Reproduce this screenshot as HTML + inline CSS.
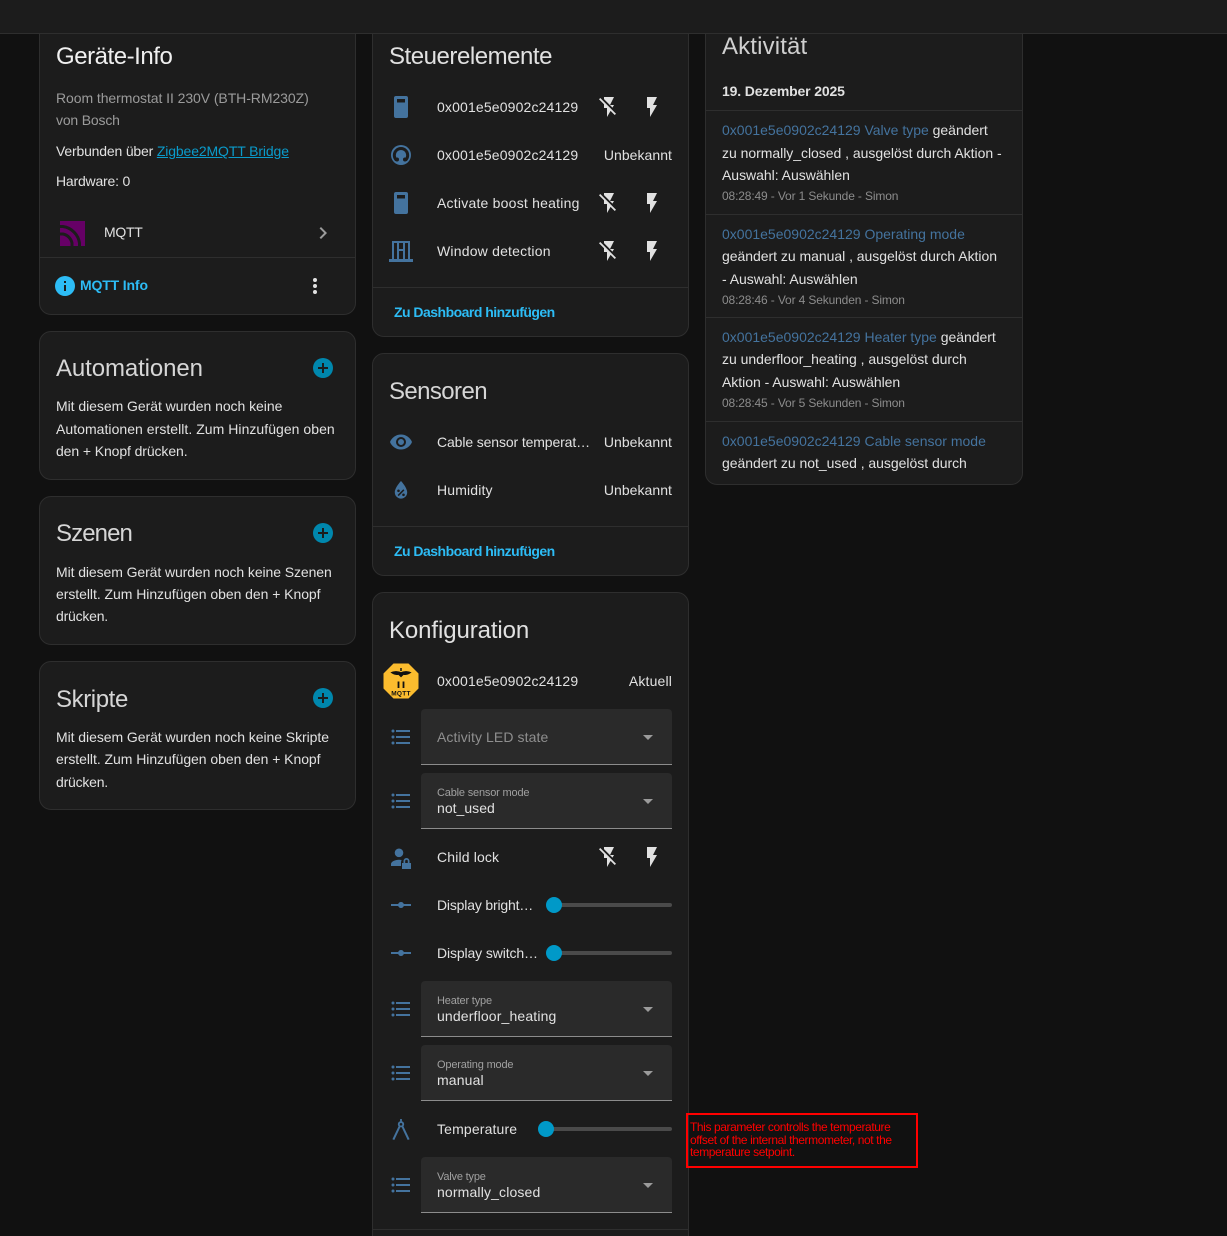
<!DOCTYPE html>
<html lang="de"><head><meta charset="utf-8"><title>Gerät</title>
<style>
html,body{margin:0;padding:0;background:#111;width:1227px;height:1236px;overflow:hidden}
body{position:relative;font-family:"Liberation Sans",sans-serif;font-size:14px;color:#e1e1e1}
.top{position:absolute;left:0;top:0;width:1227px;height:33px;background:#1c1c1c;border-bottom:1px solid #2e2e2e;z-index:5}
.c{position:absolute;box-sizing:border-box;background:#1c1c1c;border:1px solid #2e2e2e;border-radius:12px}
.t{position:absolute;white-space:nowrap;line-height:20px;height:20px;letter-spacing:.15px}
.p{letter-spacing:-.06px}
.e{letter-spacing:-.03px}
.h{font-size:24px;line-height:30px;height:30px;letter-spacing:-.1px}
.g{color:#9b9b9b}
.b{color:#44739e;letter-spacing:0}
.m{font-size:12px;color:#8c8c8c;letter-spacing:-.14px}
.lk{font-weight:bold;color:#2dbcf5;letter-spacing:-.15px}
.d{position:absolute;height:1px;background:#2e2e2e}
.f{position:absolute;left:421px;width:251px;height:56px;box-sizing:border-box;background:#2a2a2a;border-bottom:1px solid #8c8c8c;border-radius:4px 4px 0 0}
.l{font-size:11px;color:#a0a0a0;letter-spacing:-.18px}
.tr{position:absolute;height:4px;background:#4a4a4a;border-radius:2px}
.th{position:absolute;width:16px;height:16px;border-radius:50%;background:#0099c8}
svg.i{position:absolute;width:24px;height:24px;fill:#44739e}
svg.w{fill:#e1e1e1}
svg.a{fill:#9b9b9b}
.note{position:absolute;left:686px;top:1113px;width:232px;height:55px;box-sizing:border-box;border:2px solid #f00;color:#f00;font-size:12px;line-height:12.5px;padding:6px 0 0 2px;white-space:nowrap;letter-spacing:-.41px}
</style></head><body>
<svg width="0" height="0" style="position:absolute">
<symbol id="fl" viewBox="0 0 24 24"><path d="M7,2V13H10V22L17,10H13L17,2H7Z"/></symbol>
<symbol id="fo" viewBox="0 0 24 24"><path d="M17,10H13L17,2H7V4.18L15.46,12.64M3.27,3L2,4.27L7,9.27V13H10V22L13.58,15.86L17.73,20L19,18.73L3.27,3Z"/></symbol>
<symbol id="box" viewBox="0 0 24 24"><path fill-rule="evenodd" d="M7,1H17A2,2 0 0 1 19,3V21A2,2 0 0 1 17,23H7A2,2 0 0 1 5,21V3A2,2 0 0 1 7,1ZM8,4V7.5H16V4Z"/></symbol>
<symbol id="ga" viewBox="0 0 24 24"><circle cx="12" cy="12" r="10"/><path d="M7.3,17A6.7,6.7 0 1 1 16.7,17" fill="none" stroke="#1c1c1c" stroke-width="3"/><circle cx="8" cy="16.5" r="2" fill="#1c1c1c"/><circle cx="16" cy="16.5" r="2" fill="#1c1c1c"/><path d="M14,10L11.5,17.5" stroke="#44739e" stroke-width="2.2" fill="none"/></symbol>
<symbol id="win" viewBox="0 0 24 24"><path fill-rule="evenodd" d="M3,3H21V21H24V24H0V21H3ZM5,5V21H8V5ZM10,5V11H14V5ZM16,5V21H19V5ZM10,13V21H14V13Z"/></symbol>
<symbol id="eye" viewBox="0 0 24 24"><path d="M12,9A3,3 0 0,0 9,12A3,3 0 0,0 12,15A3,3 0 0,0 15,12A3,3 0 0,0 12,9M12,17A5,5 0 0,1 7,12A5,5 0 0,1 12,7A5,5 0 0,1 17,12A5,5 0 0,1 12,17M12,4.5C7,4.5 2.73,7.61 1,12C2.73,16.39 7,19.5 12,19.5C17,19.5 21.27,16.39 23,12C21.27,7.61 17,4.5 12,4.5Z"/></symbol>
<symbol id="drop" viewBox="0 0 24 24"><path fill-rule="evenodd" d="M12,3C12,3 5.8,9.6 5.8,14.4A6.2,6.2 0 0 0 18.2,14.4C18.2,9.6 12,3 12,3ZM9.5,11.5A1.3,1.3 0 1 1 9.5,14.1A1.3,1.3 0 1 1 9.5,11.5ZM14.5,15.5A1.3,1.3 0 1 1 14.5,18.1A1.3,1.3 0 1 1 14.5,15.5ZM14.3,11.3L15.4,12.4L9.7,18.1L8.6,17Z"/></symbol>
<symbol id="ls" viewBox="0 0 24 24"><path d="M7,5H21V7H7V5M7,13V11H21V13H7M4,4.5A1.5,1.5 0 0,1 5.5,6A1.5,1.5 0 0,1 4,7.5A1.5,1.5 0 0,1 2.5,6A1.5,1.5 0 0,1 4,4.5M4,10.5A1.5,1.5 0 0,1 5.5,12A1.5,1.5 0 0,1 4,13.5A1.5,1.5 0 0,1 2.5,12A1.5,1.5 0 0,1 4,10.5M7,19V17H21V19H7M4,16.5A1.5,1.5 0 0,1 5.5,18A1.5,1.5 0 0,1 4,19.5A1.5,1.5 0 0,1 2.5,18A1.5,1.5 0 0,1 4,16.5Z"/></symbol>
<symbol id="ray" viewBox="0 0 24 24"><path d="M2 11H9.17C9.58 9.83 10.69 9 12 9S14.42 9.83 14.83 11H22V13H14.83C14.42 14.17 13.31 15 12 15S9.58 14.17 9.17 13H2V11Z"/></symbol>
<symbol id="lock" viewBox="0 0 24 24"><path fill-rule="evenodd" d="M10,3.5A4.3,4.3 0 1 1 10,12.1A4.3,4.3 0 1 1 10,3.5ZM2,21V19C2,16.5 6,14.7 10,14.7C10.9,14.7 11.8,14.8 12.6,15C12.2,15.8 12,16.6 12,17.5V21ZM17.5,13A3,3 0 0 1 20.5,16V18H22V24H13V18H14.5V16A3,3 0 0 1 17.5,13ZM17.5,14.7A1.3,1.3 0 0 0 16.2,16V18H18.8V16A1.3,1.3 0 0 0 17.5,14.7Z"/></symbol>
<symbol id="cmp" viewBox="0 0 24 24"><path fill-rule="evenodd" d="M11.1,2H12.9V4.2A3.2,3.2 0 0 1 14.4,9.3L20.6,22.2L18.7,23L12.7,10.3H11.3L5.3,23L3.4,22.2L9.6,9.3A3.2,3.2 0 0 1 11.1,4.2ZM12,6A1.3,1.3 0 1 0 12,8.6A1.3,1.3 0 1 0 12,6Z"/></symbol>
<symbol id="pl" viewBox="0 0 24 24"><path d="M17,13H13V17H11V13H7V11H11V7H13V11H17M12,2A10,10 0 0,0 2,12A10,10 0 0,0 12,22A10,10 0 0,0 22,12A10,10 0 0,0 12,2Z"/></symbol>
<symbol id="dn" viewBox="0 0 24 24"><path d="M7,10L12,15L17,10H7Z"/></symbol>
</svg>

<div class="top"></div>

<!-- Column 1 -->
<div class="c" style="left:39px;top:-20px;width:317px;height:335px"></div>
<div class="t h" style="left:56px;top:42px;color:#f0f0f0;letter-spacing:-.46px">Geräte-Info</div>
<div class="t g" style="left:56px;top:88px;letter-spacing:-.07px">Room thermostat II 230V (BTH-RM230Z)</div>
<div class="t g" style="left:56px;top:110px;letter-spacing:-.18px">von Bosch</div>
<div class="t" style="left:56px;top:141px;letter-spacing:-.18px">Verbunden über <span style="color:#0a9bcb;text-decoration:underline;letter-spacing:-.13px">Zigbee2MQTT Bridge</span></div>
<div class="t" style="left:56px;top:171px;letter-spacing:-.2px">Hardware: 0</div>
<svg style="position:absolute;left:60px;top:221px" width="25" height="25" viewBox="0 0 25 25"><rect width="25" height="25" fill="#660066"/><path d="M-1,5.5H3A19.5,19.5 0 0 1 19.5,22V26M-1,13H3A11.5,11.5 0 0 1 12,22V26" fill="none" stroke="#1c1c1c" stroke-width="3"/></svg>
<div class="t" style="left:104px;top:222px;letter-spacing:-.3px">MQTT</div>
<svg class="i a" style="left:311px;top:221px"><path d="M8.59,16.58L13.17,12L8.59,7.41L10,6L16,12L10,18L8.59,16.58Z"/></svg>
<div class="d" style="left:40px;top:257px;width:315px"></div>
<svg class="i" style="left:53px;top:274px;fill:#2dbcf5"><path d="M13,9H11V7H13M13,17H11V11H13M12,2A10,10 0 0,0 2,12A10,10 0 0,0 12,22A10,10 0 0,0 22,12A10,10 0 0,0 12,2Z"/></svg>
<div class="t lk" style="left:80px;top:275px">MQTT Info</div>
<svg class="i w" style="left:303px;top:274px"><path d="M12,16A2,2 0 0,1 14,18A2,2 0 0,1 12,20A2,2 0 0,1 10,18A2,2 0 0,1 12,16M12,10A2,2 0 0,1 14,12A2,2 0 0,1 12,14A2,2 0 0,1 10,12A2,2 0 0,1 12,10M12,4A2,2 0 0,1 14,6A2,2 0 0,1 12,8A2,2 0 0,1 10,6A2,2 0 0,1 12,4Z"/></svg>

<div class="c" style="left:39px;top:331px;width:317px;height:149px"></div>
<div class="t h" style="left:56px;top:354px;color:#d6d6d6;letter-spacing:-.1px">Automationen</div>
<svg class="i" style="left:311px;top:356px;fill:#0087ad"><use href="#pl"/></svg>
<div class="t p" style="left:56px;top:396px;letter-spacing:-.05px">Mit diesem Gerät wurden noch keine</div>
<div class="t p" style="left:56px;top:419px;letter-spacing:.04px">Automationen erstellt. Zum Hinzufügen oben</div>
<div class="t p" style="left:56px;top:441px;letter-spacing:-.1px">den + Knopf drücken.</div>

<div class="c" style="left:39px;top:496px;width:317px;height:149px"></div>
<div class="t h" style="left:56px;top:519px;color:#d6d6d6;letter-spacing:-.9px">Szenen</div>
<svg class="i" style="left:311px;top:521px;fill:#0087ad"><use href="#pl"/></svg>
<div class="t p" style="left:56px;top:562px;letter-spacing:-.09px">Mit diesem Gerät wurden noch keine Szenen</div>
<div class="t p" style="left:56px;top:584px;letter-spacing:-.05px">erstellt. Zum Hinzufügen oben den + Knopf</div>
<div class="t p" style="left:56px;top:606px;letter-spacing:-.22px">drücken.</div>

<div class="c" style="left:39px;top:661px;width:317px;height:149px"></div>
<div class="t h" style="left:56px;top:685px;color:#d6d6d6;letter-spacing:-.4px">Skripte</div>
<svg class="i" style="left:311px;top:686px;fill:#0087ad"><use href="#pl"/></svg>
<div class="t p" style="left:56px;top:727px">Mit diesem Gerät wurden noch keine Skripte</div>
<div class="t p" style="left:56px;top:749px;letter-spacing:-.05px">erstellt. Zum Hinzufügen oben den + Knopf</div>
<div class="t p" style="left:56px;top:772px;letter-spacing:-.22px">drücken.</div>

<!-- Column 2 -->
<div class="c" style="left:372px;top:-20px;width:317px;height:357px"></div>
<div class="t h" style="left:389px;top:42px;letter-spacing:-.46px">Steuerelemente</div>
<svg class="i" style="left:389px;top:95px"><use href="#box"/></svg>
<div class="t" style="left:437px;top:97px">0x001e5e0902c24129</div>
<svg class="i w" style="left:597px;top:95px"><use href="#fo"/></svg>
<svg class="i w" style="left:640px;top:95px"><use href="#fl"/></svg>
<svg class="i" style="left:389px;top:143px"><use href="#ga"/></svg>
<div class="t" style="left:437px;top:145px">0x001e5e0902c24129</div>
<div class="t" style="right:555px;top:145px;letter-spacing:.05px">Unbekannt</div>
<svg class="i" style="left:389px;top:191px"><use href="#box"/></svg>
<div class="t" style="left:437px;top:193px;letter-spacing:.22px">Activate boost heating</div>
<svg class="i w" style="left:597px;top:191px"><use href="#fo"/></svg>
<svg class="i w" style="left:640px;top:191px"><use href="#fl"/></svg>
<svg class="i" style="left:389px;top:238px"><use href="#win"/></svg>
<div class="t" style="left:437px;top:241px;letter-spacing:.2px">Window detection</div>
<svg class="i w" style="left:597px;top:239px"><use href="#fo"/></svg>
<svg class="i w" style="left:640px;top:239px"><use href="#fl"/></svg>
<div class="d" style="left:373px;top:287px;width:315px"></div>
<div class="t lk" style="left:394px;top:302px;letter-spacing:-.52px">Zu Dashboard hinzufügen</div>

<div class="c" style="left:372px;top:353px;width:317px;height:223px"></div>
<div class="t h" style="left:389px;top:377px;color:#d6d6d6;letter-spacing:-.6px">Sensoren</div>
<svg class="i" style="left:389px;top:430px"><use href="#eye"/></svg>
<div class="t" style="left:437px;top:432px;letter-spacing:-.12px">Cable sensor temperat…</div>
<div class="t" style="right:555px;top:432px;letter-spacing:.05px">Unbekannt</div>
<svg class="i" style="left:389px;top:478px"><use href="#drop"/></svg>
<div class="t" style="left:437px;top:480px">Humidity</div>
<div class="t" style="right:555px;top:480px;letter-spacing:.05px">Unbekannt</div>
<div class="d" style="left:373px;top:526px;width:315px"></div>
<div class="t lk" style="left:394px;top:541px;letter-spacing:-.52px">Zu Dashboard hinzufügen</div>

<div class="c" style="left:372px;top:592px;width:317px;height:700px"></div>
<div class="t h" style="left:389px;top:616px">Konfiguration</div>
<svg style="position:absolute;left:383px;top:663px" width="36" height="36" viewBox="0 0 36 36"><path d="M10.5,0.5H25.5L35.5,10.5V25.5L25.5,35.5H10.5L0.5,25.5V10.5Z" fill="#fbbc2e"/><path d="M8,9.5C11,8 15,8 18,9.5C21,8 25,8 28,9.5C25,11.5 22,12 20.5,11.5L18,14L15.5,11.5C14,12 11,11.5 8,9.5Z" fill="#111" stroke="#111" stroke-width=".6"/><path d="M18,5V8" stroke="#111" stroke-width="1.5" fill="none"/><path d="M15.5,18.5V25M20.5,18.5V25" stroke="#111" stroke-width="1.8" fill="none"/><text x="18" y="32.5" text-anchor="middle" font-family="Liberation Sans,sans-serif" font-size="6.5" font-weight="bold" letter-spacing=".3" fill="#111">MQTT</text></svg>
<div class="t" style="left:437px;top:671px">0x001e5e0902c24129</div>
<div class="t" style="right:555px;top:671px">Aktuell</div>

<svg class="i" style="left:389px;top:725px"><use href="#ls"/></svg>
<div class="f" style="top:709px"></div>
<div class="t" style="left:437px;top:727px;color:#8f8f8f;letter-spacing:.09px">Activity LED state</div>
<svg class="i a" style="left:636px;top:725px"><use href="#dn"/></svg>

<svg class="i" style="left:389px;top:789px"><use href="#ls"/></svg>
<div class="f" style="top:773px"></div>
<div class="t l" style="left:437px;top:783px">Cable sensor mode</div>
<div class="t" style="left:437px;top:798px;letter-spacing:.03px">not_used</div>
<svg class="i a" style="left:636px;top:789px"><use href="#dn"/></svg>

<svg class="i" style="left:389px;top:845px"><use href="#lock"/></svg>
<div class="t" style="left:437px;top:847px">Child lock</div>
<svg class="i w" style="left:597px;top:845px"><use href="#fo"/></svg>
<svg class="i w" style="left:640px;top:845px"><use href="#fl"/></svg>

<svg class="i" style="left:389px;top:893px"><use href="#ray"/></svg>
<div class="t" style="left:437px;top:895px;letter-spacing:-.18px">Display bright…</div>
<div class="tr" style="left:554px;top:903px;width:118px"></div><div class="th" style="left:546px;top:897px"></div>

<svg class="i" style="left:389px;top:941px"><use href="#ray"/></svg>
<div class="t" style="left:437px;top:943px;letter-spacing:-.12px">Display switch…</div>
<div class="tr" style="left:554px;top:951px;width:118px"></div><div class="th" style="left:546px;top:945px"></div>

<svg class="i" style="left:389px;top:997px"><use href="#ls"/></svg>
<div class="f" style="top:981px"></div>
<div class="t l" style="left:437px;top:991px">Heater type</div>
<div class="t" style="left:437px;top:1006px">underfloor_heating</div>
<svg class="i a" style="left:636px;top:997px"><use href="#dn"/></svg>

<svg class="i" style="left:389px;top:1061px"><use href="#ls"/></svg>
<div class="f" style="top:1045px"></div>
<div class="t l" style="left:437px;top:1055px">Operating mode</div>
<div class="t" style="left:437px;top:1070px">manual</div>
<svg class="i a" style="left:636px;top:1061px"><use href="#dn"/></svg>

<svg class="i" style="left:389px;top:1117px"><use href="#cmp"/></svg>
<div class="t" style="left:437px;top:1119px">Temperature</div>
<div class="tr" style="left:546px;top:1127px;width:126px"></div><div class="th" style="left:538px;top:1121px"></div>

<svg class="i" style="left:389px;top:1173px"><use href="#ls"/></svg>
<div class="f" style="top:1157px"></div>
<div class="t l" style="left:437px;top:1167px">Valve type</div>
<div class="t" style="left:437px;top:1182px">normally_closed</div>
<svg class="i a" style="left:636px;top:1173px"><use href="#dn"/></svg>
<div class="d" style="left:373px;top:1229px;width:315px"></div>

<div class="note">This parameter controlls the temperature<br>offset of the internal thermometer, not the<br>temperature setpoint.</div>

<!-- Column 3 -->
<div class="c" style="left:705px;top:-20px;width:318px;height:505px"></div>
<div class="t h" style="left:722px;top:32px;color:#cfcfcf;letter-spacing:.15px">Aktivität</div>
<div class="t" style="left:722px;top:81px;font-weight:bold;letter-spacing:-.15px">19. Dezember 2025</div>
<div class="d" style="left:706px;top:110px;width:316px"></div>
<div class="t e" style="left:722px;top:120px"><span class="b">0x001e5e0902c24129 Valve type</span> geändert</div>
<div class="t e" style="left:722px;top:143px">zu normally_closed , ausgelöst durch Aktion -</div>
<div class="t e" style="left:722px;top:165px">Auswahl: Auswählen</div>
<div class="t m" style="left:722px;top:186px">08:28:49 - Vor 1 Sekunde - Simon</div>
<div class="d" style="left:706px;top:214px;width:316px"></div>
<div class="t b" style="left:722px;top:224px">0x001e5e0902c24129 Operating mode</div>
<div class="t e" style="left:722px;top:246px">geändert zu manual , ausgelöst durch Aktion</div>
<div class="t e" style="left:722px;top:269px">- Auswahl: Auswählen</div>
<div class="t m" style="left:722px;top:290px">08:28:46 - Vor 4 Sekunden - Simon</div>
<div class="d" style="left:706px;top:317px;width:316px"></div>
<div class="t e" style="left:722px;top:327px"><span class="b">0x001e5e0902c24129 Heater type</span> geändert</div>
<div class="t e" style="left:722px;top:349px">zu underfloor_heating , ausgelöst durch</div>
<div class="t e" style="left:722px;top:372px">Aktion - Auswahl: Auswählen</div>
<div class="t m" style="left:722px;top:393px">08:28:45 - Vor 5 Sekunden - Simon</div>
<div class="d" style="left:706px;top:421px;width:316px"></div>
<div class="t b" style="left:722px;top:431px">0x001e5e0902c24129 Cable sensor mode</div>
<div class="t e" style="left:722px;top:453px">geändert zu not_used , ausgelöst durch</div>
</body></html>
